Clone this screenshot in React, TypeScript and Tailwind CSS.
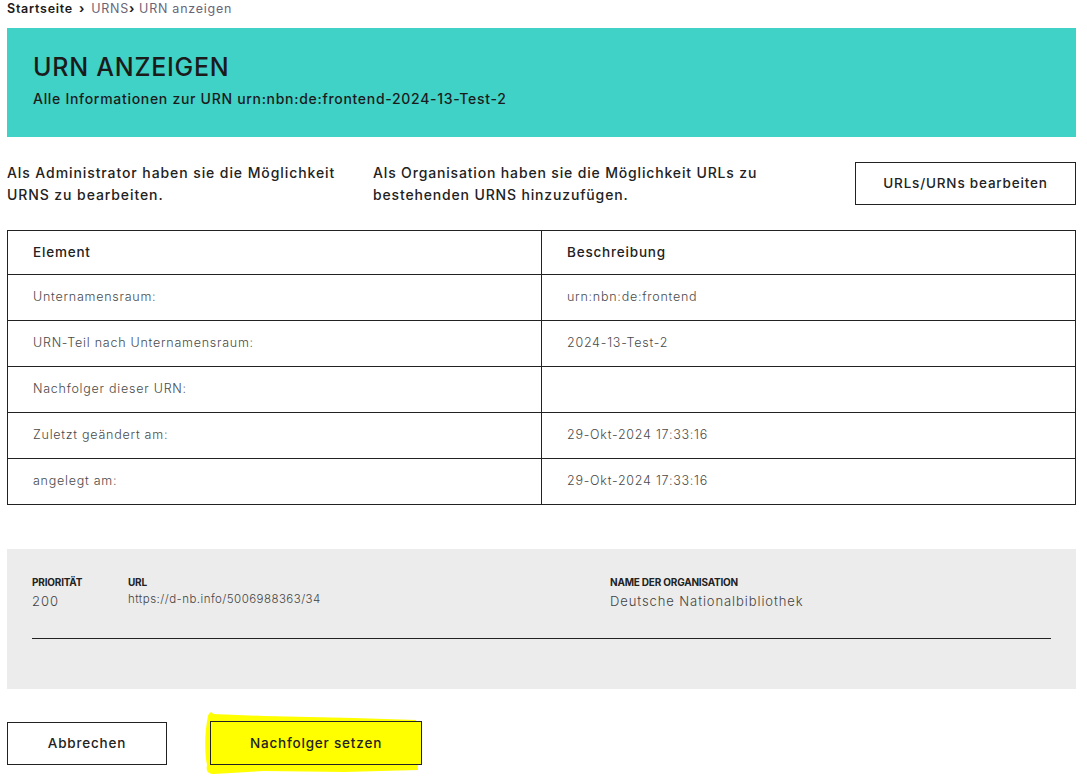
import React from "react";

const rows = [
  { label: "Unternamensraum:", value: "urn:nbn:de:frontend" },
  { label: "URN-Teil nach Unternamensraum:", value: "2024-13-Test-2" },
  { label: "Nachfolger dieser URN:", value: "" },
  { label: "Zuletzt geändert am:", value: "29-Okt-2024 17:33:16" },
  { label: "angelegt am:", value: "29-Okt-2024 17:33:16" },
];

export default function App() {
  return (
    <div
      className="bg-white text-[#222] min-h-[776px] pl-[7px] w-[1076px]"
      style={{ fontFamily: 'Inter, "Open Sans", sans-serif' }}
    >
      {/* Breadcrumb */}
      <nav className="flex items-center h-[18px] text-[12.5px] tracking-[0.06em]">
        <span className="font-semibold text-[#1a1a1a]">Startseite</span>
        <span className="mx-[6px] font-bold text-[#1a1a1a]">›</span>
        <span className="text-[#6b6477]">URNS</span>
        <span className="font-bold text-[#1a1a1a] mr-[4px]">›</span>
        <span className="text-[#6b6477]">URN anzeigen</span>
      </nav>

      {/* Banner */}
      <header className="mt-[10px] h-[109px] bg-[#40d1c7] px-[26px] pt-[24px]">
        <h1 className="text-[25px] leading-[30px] font-medium tracking-[0.03em] text-[#1b1b1b]">
          URN ANZEIGEN
        </h1>
        <p className="mt-[7px] text-[14px] leading-[20px] font-medium tracking-[0.05em] text-[#1b1b1b]">
          Alle Informationen zur URN urn:nbn:de:frontend-2024-13-Test-2
        </p>
      </header>

      {/* Permission notes */}
      <section className="mt-[25px] flex items-start">
        <p className="w-[366px] pr-[20px] text-[14px] leading-[22px] font-medium tracking-[0.065em]">
          Als Administrator haben sie die Möglichkeit URNS zu bearbeiten.
        </p>
        <p className="w-[400px] text-[14px] leading-[22px] font-medium tracking-[0.06em]">
          Als Organisation haben sie die Möglichkeit URLs zu bestehenden URNS hinzuzufügen.
        </p>
        <button className="ml-auto h-[43px] w-[221px] border border-[#222] text-[13.5px] font-medium tracking-[0.06em]">
          URLs/URNs bearbeiten
        </button>
      </section>

      {/* Table */}
      <table className="mt-[24px] w-full border-collapse border border-[#222]">
        <thead>
          <tr className="h-[44px]">
            <th className="w-[534px] border border-[#222] pl-[25px] text-left text-[13.5px] font-medium tracking-[0.06em]">
              Element
            </th>
            <th className="border border-[#222] pl-[25px] text-left text-[13.5px] font-medium tracking-[0.06em]">
              Beschreibung
            </th>
          </tr>
        </thead>
        <tbody>
          {rows.map((r) => (
            <tr key={r.label} className="h-[46px]">
              <td className="border border-[#222] pl-[25px] text-[12.5px] text-[#4a4a4a] tracking-[0.06em] font-light">
                {r.label}
              </td>
              <td className="border border-[#222] pl-[25px] text-[12.5px] text-[#4a4a4a] tracking-[0.06em] font-light">
                {r.value}
              </td>
            </tr>
          ))}
        </tbody>
      </table>

      {/* URL panel */}
      <section className="mt-[44px] h-[140px] bg-[#ececec] px-[25px] pt-[27px]">
        <div className="flex">
          <div className="w-[96px]">
            <div className="text-[10px] leading-[12px] font-bold uppercase tracking-[-0.02em]">Priorität</div>
            <div className="mt-[4px] text-[13px] leading-[18px] text-[#444] tracking-[0.08em] font-light">200</div>
          </div>
          <div className="w-[482px]">
            <div className="text-[10px] leading-[12px] font-bold uppercase tracking-[-0.02em]">URL</div>
            <div className="mt-[3px] text-[11.5px] leading-[16px] text-[#444] tracking-[0.04em] font-light">
              https://d-nb.info/5006988363/34
            </div>
          </div>
          <div>
            <div className="text-[10px] leading-[12px] font-bold uppercase tracking-[-0.02em]">Name der Organisation</div>
            <div className="mt-[4px] text-[13px] leading-[18px] text-[#444] tracking-[0.07em] font-light">
              Deutsche Nationalbibliothek
            </div>
          </div>
        </div>
        <div className="mt-[28px] border-t border-[#222]" />
      </section>

      {/* Actions */}
      <footer className="mt-[32px] flex items-center">
        <button className="h-[43px] w-[160px] border border-[#222] text-[13.5px] font-medium tracking-[0.06em]">
          Abbrechen
        </button>
        <div className="relative ml-[43px]">
          <svg
            className="absolute -left-[6px] -top-[11px]"
            width="222"
            height="66"
            viewBox="0 0 222 66"
          >
            <path
              d="M4 6 C5 2 8 1 9 4 L60 6 L150 8 L212 10 L214 60 L140 62 L60 61 L10 64 C3 64 2 60 3 55 C0 40 1 20 4 6 Z"
              fill="#ffff00"
            />
          </svg>
          <button className="relative h-[44px] w-[212px] border border-[#222] bg-[#ffff00] text-[13.5px] font-medium tracking-[0.06em]">
            Nachfolger setzen
          </button>
        </div>
      </footer>
    </div>
  );
}
